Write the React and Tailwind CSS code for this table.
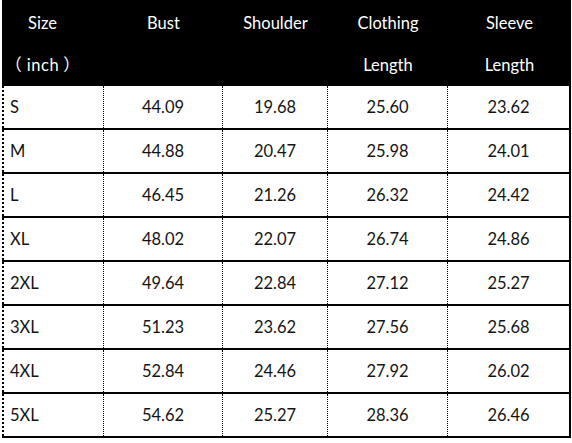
import React from "react";

const rows = [
  ["S", "44.09", "19.68", "25.60", "23.62"],
  ["M", "44.88", "20.47", "25.98", "24.01"],
  ["L", "46.45", "21.26", "26.32", "24.42"],
  ["XL", "48.02", "22.07", "26.74", "24.86"],
  ["2XL", "49.64", "22.84", "27.12", "25.27"],
  ["3XL", "51.23", "23.62", "27.56", "25.68"],
  ["4XL", "52.84", "24.46", "27.92", "26.02"],
  ["5XL", "54.62", "25.27", "28.36", "26.46"],
];

const headers = [
  ["Size", "inch"],
  ["Bust", ""],
  ["Shoulder", ""],
  ["Clothing", "Length"],
  ["Sleeve", "Length"],
];

const cols = "grid grid-cols-[102px_119px_105px_120px_123px]";

export default function App() {
  return (
    <div
      className="w-[572px] h-[443px] bg-white"
      style={{ fontFamily: "Lato, 'Noto Sans CJK SC', sans-serif" }}
    >
      <div className="ml-[2px] w-[569px] text-[16.5px]">
        <div className={`${cols} bg-black text-white h-[86px]`}>
          {headers.map((h, i) => (
            <div
              key={i}
              className={`flex flex-col text-center pt-[2px] ${i === 0 ? "pr-[21px]" : ""}`}
            >
              <div className="h-[42px] flex items-center justify-center">{h[0]}</div>
              <div className="h-[42px] flex items-center justify-center">
                {i === 0 ? (
                  <>
                    <span className="mr-[5px]">（</span>
                    <span className="tracking-[0.5px]">inch</span>
                    <span className="ml-[4px]">）</span>
                  </>
                ) : (
                  h[1]
                )}
              </div>
            </div>
          ))}
        </div>

        {rows.map((r) => (
          <div key={r[0]} className={`${cols} h-[44px] border-b-2 border-black text-[#141414]`}>
            {r.map((v, j) => (
              <div
                key={j}
                className={`flex items-center ${
                  j === 0 ? "border-l-2 border-l-black pl-[6px]" : "justify-center"
                } ${
                  j === 4
                    ? "border-r-2 border-r-black"
                    : "border-r border-dotted border-r-black"
                }`}
              >
                {v}
              </div>
            ))}
          </div>
        ))}
      </div>
    </div>
  );
}
